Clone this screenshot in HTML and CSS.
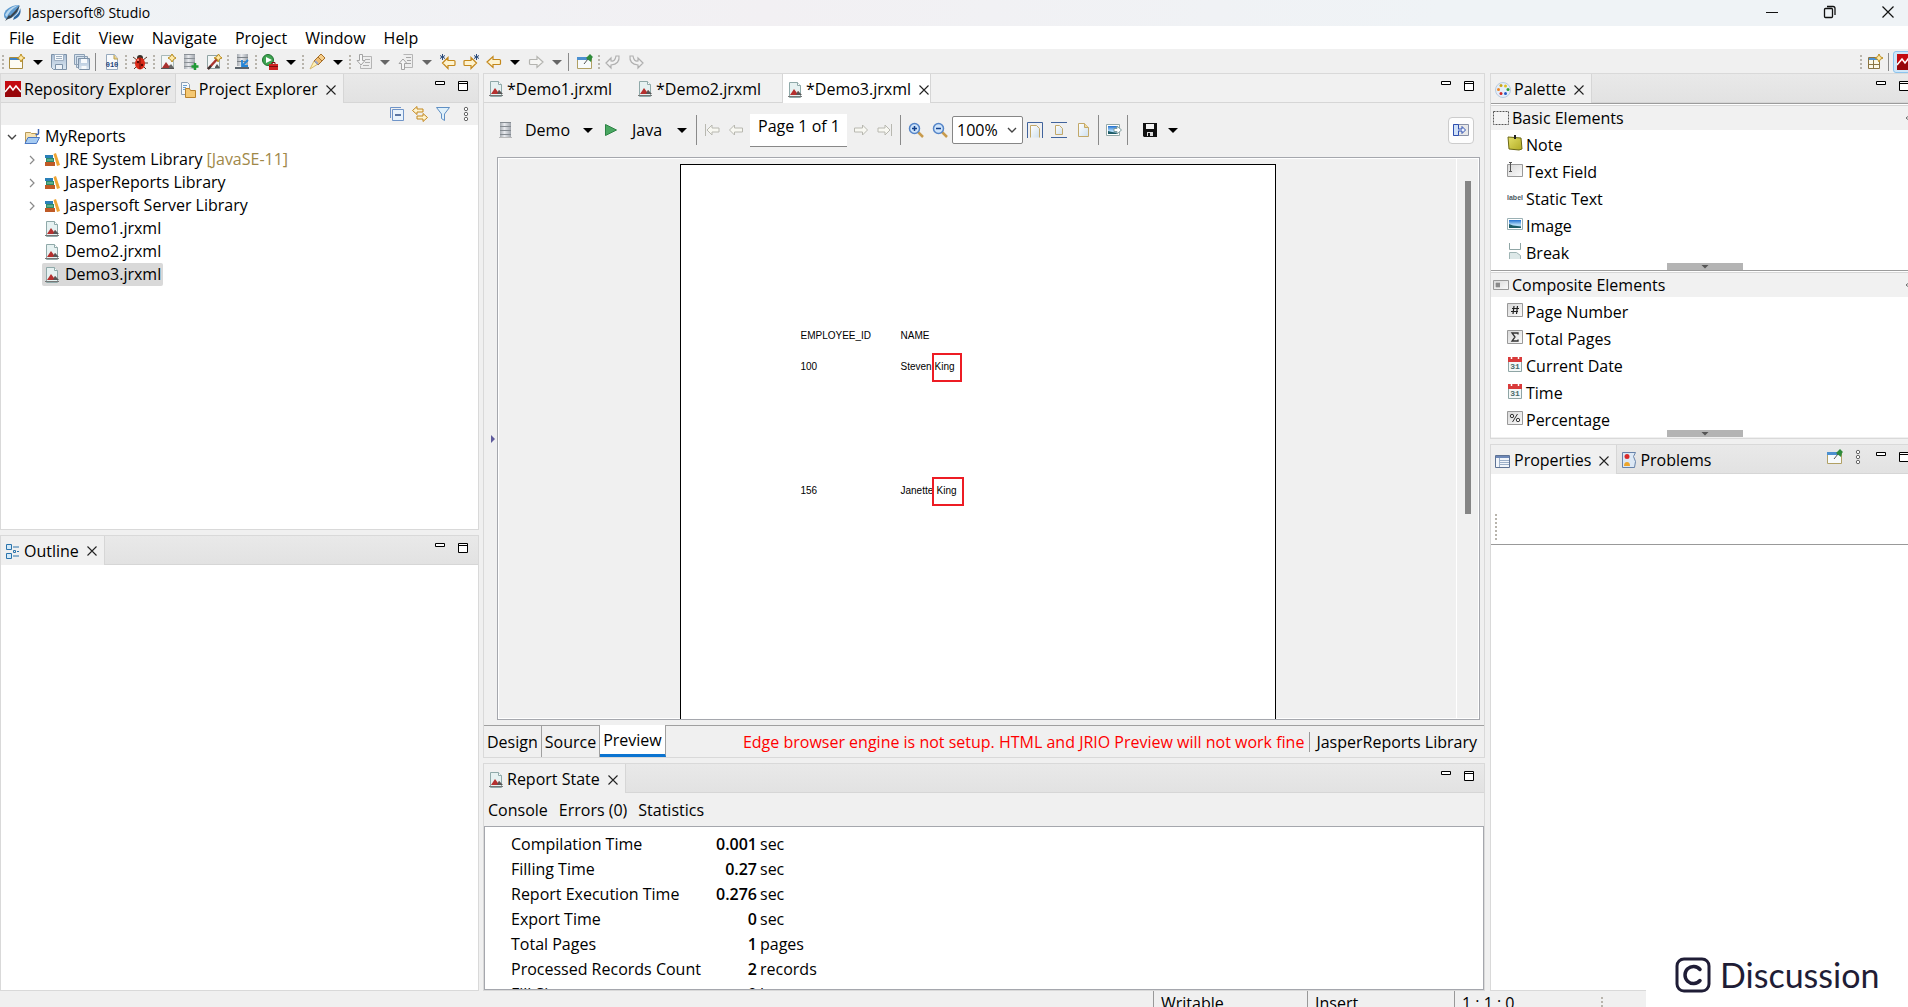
FILE: index.html
```html
<!DOCTYPE html>
<html lang="en">
<head>
<meta charset="utf-8">
<title>Jaspersoft® Studio</title>
<link rel="stylesheet" href="styles.css">
</head>
<body>
<svg class="sprite" aria-hidden="true">
  <defs>
    <linearGradient id="gFloppy" x1="0" y1="0" x2="0" y2="1"><stop offset="0" stop-color="#a9bdd4"/><stop offset="1" stop-color="#dce8f2"/></linearGradient>
    <linearGradient id="gPage" x1="0" y1="0" x2="1" y2="1"><stop offset="0" stop-color="#ffffff"/><stop offset="1" stop-color="#cfe0ee"/></linearGradient>
    <linearGradient id="gSky" x1="0" y1="0" x2="0" y2="1"><stop offset="0" stop-color="#1f6fd0"/><stop offset=".6" stop-color="#b4dcf8"/><stop offset="1" stop-color="#9cc8ea"/></linearGradient>
    <linearGradient id="gServer" x1="0" y1="0" x2="1" y2="0"><stop offset="0" stop-color="#a4a9af"/><stop offset=".4" stop-color="#e8eaee"/><stop offset="1" stop-color="#a0a5ac"/></linearGradient>
    <linearGradient id="gField" x1="0" y1="0" x2="1" y2="1"><stop offset="0" stop-color="#d8d8d8"/><stop offset="1" stop-color="#fbfbfb"/></linearGradient>
    <linearGradient id="gNote" x1="0" y1="0" x2="1" y2="1"><stop offset="0" stop-color="#e4e068"/><stop offset="1" stop-color="#b0aa24"/></linearGradient>
  </defs>
  <symbol id="logo" viewBox="0 0 20 20"><path d="M2 13C1 8 8 2 17 2c1 6-3 12-11 14-2 .3-3.500-.5-4-3z" fill="#5f9bd0"/><path d="M3 12c3-6 8-9 14-10-4 2-10 6-12 12z" fill="#b9d8ef"/><path d="M3 18l4-6 1 1 5-5 5-6-3 7-6 6-3 1z" fill="#38424c"/><path d="M12 14c3-2 6-5 6-9 2 5-1 10-7 12z" fill="#2966a3"/></symbol>
  <symbol id="report" viewBox="0 0 16 16"><path d="M2.500.5h8l3 3v12h-11z" fill="#e6f1f1" stroke="#8fa9a9"/><path d="M10.500.5v3h3" fill="#fff" stroke="#8fa9a9"/><path d="M3 13l4-6 3 4 1-2 3 4z" fill="#b5302f"/><path d="M9 13l2-4 4 4z" fill="#555"/><path d="M1 14.500h14" stroke="#777"/></symbol>
  <symbol id="reportNew" viewBox="0 0 16 16"><path d="M1.500 1.500h12v13h-12z" fill="#f3f7f7" stroke="#a9b9b9"/><path d="M2 14l4-6 3 4 1-1 3 3z" fill="#a83230"/><path d="M9 13l2-3 3 4H9z" fill="#666"/><path d="M1 14.500h13" stroke="#555"/><path d="M12 0l1.500 2.500L16 4l-2.500 1.500L12 8l-1.500-2.500L8 4l2.500-1.500z" fill="#ffe9a8" stroke="#b98b1c"/></symbol>
  <symbol id="newWiz" viewBox="0 0 16 16"><path d="M.5 3.500h13v11H.5z" fill="#fdfbf2" stroke="#a98c40"/><path d="M1 4h9v2H1z" fill="#3f82c4"/><path d="M12 0l1.300 2.700L16 4l-2.700 1.300L12 8l-1.300-2.700L8 4l2.700-1.300z" fill="#ffe9a8" stroke="#b98b1c"/></symbol>
  <symbol id="floppy" viewBox="0 0 16 16"><path d="M.5.5h15v15h-13l-2-2z" fill="url(#gFloppy)" stroke="#7d92a8"/><path d="M3.500.5h9v6h-9z" fill="#f7fafc" stroke="#9fb0c2"/><path d="M5 2.500h6M5 4.500h6" stroke="#9fb0c2"/><path d="M4.500 10.500h7v5h-7z" fill="#eef3f8" stroke="#7d92a8"/></symbol>
  <symbol id="floppies" viewBox="0 0 16 16"><path d="M.5.500h10v10H.5zM2.500 2.500h11v11h-11z" fill="#d6e2ee" stroke="#8ca0b5"/><path d="M4.500 4.500h11v11h-10l-1-1z" fill="url(#gFloppy)" stroke="#7d92a8"/><path d="M7 5h6v4H7zM7.500 12h5v3h-5z" fill="#f7fafc"/></symbol>
  <symbol id="bug" viewBox="0 0 16 16"><path d="M1 3l4 3M15 3l-4 3M0 9h4M16 9h-4M2 15l3-3M14 15l-3-3" stroke="#5a3a2a"/><circle cx="8" cy="4" r="3" fill="#39302a"/><ellipse cx="8" cy="9.500" rx="5" ry="6" fill="#dc2a18"/><path d="M8 4v11" stroke="#6e0f08"/><circle cx="6" cy="8" r="1.200" fill="#5c0a05"/><circle cx="10" cy="11" r="1.200" fill="#5c0a05"/><circle cx="6" cy="6" r="1" fill="#ff9c85"/></symbol>
  <symbol id="server" viewBox="0 0 16 16"><path d="M2 0h11v15H2z" fill="url(#gServer)"/><path d="M2 4.500h11M2 8.500h11M2 12.500h11M2 .5h11" stroke="#858b91"/><path d="M1 15.500h13" stroke="#b9b9b9"/></symbol>
  <symbol id="serverAdd" viewBox="0 0 16 16"><path d="M1 0h11v15H1z" fill="url(#gServer)"/><path d="M1 4.500h11M1 8.500h11M1 12.500h11M1 .5h11" stroke="#8a9096"/><path d="M12 9v7M8.500 12.500h7" stroke="#1f9a34" stroke-width="2.500"/></symbol>
  <symbol id="wizard" viewBox="0 0 16 16"><path d="M1.500 1.500h12v13h-12z" fill="#f3f7f7" stroke="#8fa3a3"/><path d="M9 13l2-3 3 4H9z" fill="#555"/><path d="M2 15L13 3" stroke="#a8352f" stroke-width="2.500"/><path d="M2 15l3-3" stroke="#333" stroke-width="2"/><path d="M12.500 0L14 2.500 16 4l-2.500 1-1.500 3-1-3-3-1 3-1.500z" fill="#ffe9a8" stroke="#b98b1c"/></symbol>
  <symbol id="deploy" viewBox="0 0 16 16"><path d="M3 0h11v12H3z" fill="url(#gServer)"/><path d="M3 3.500h11M3 7.500h11" stroke="#7c8288"/><path d="M1 13h14v2H1z" fill="#5b646c"/><path d="M14 6l-5 5M8 6v6h6" stroke="#2586d8" stroke-width="1.800" fill="none"/></symbol>
  <symbol id="runExt" viewBox="0 0 16 16"><circle cx="6" cy="6" r="5.500" fill="#3fa351" stroke="#1e7230"/><path d="M4 3l6 3-6 3z" fill="#fff"/><path d="M7 10h9v6H7z" fill="#cf2222"/><path d="M10 10V8.500h3V10M7 12.500h9" stroke="#7d0e0e" fill="none"/></symbol>
  <symbol id="torch" viewBox="0 0 16 16"><path d="M1 15l4-8 4 3z" fill="#fff2b8" stroke="#d9b766"/><path d="M5 7l4-4 4 4-4 4z" fill="#f0bd72" stroke="#a8702a"/><path d="M9 3l3-3 4 4-3 3z" fill="#f6cf8c" stroke="#a8702a"/><path d="M6 7l3 3" stroke="#9aa5c8" stroke-width="2"/></symbol>
  <symbol id="annDown" viewBox="0 0 16 16"><path d="M6.500 2.500h9v12h-11v-3" fill="#eee" stroke="#b5b5b5"/><path d="M9 5.500h5M9 8.500h5M7 11.500h6" stroke="#b0b0b0"/><path d="M3.500.500h3v6h2.500L5 11 1 6.500h2.500z" fill="#f6f6f6" stroke="#a3a3a3"/></symbol>
  <symbol id="annUp" viewBox="0 0 16 16"><path d="M5.500.5h9v13h-8" fill="#eee" stroke="#b5b5b5"/><path d="M8 3.500h5M9 6.500h4M9 9.500h4" stroke="#a5a5a5"/><path d="M3.500 15.500h3v-6H9L5 5 1 9.500h2.500z" fill="#f6f6f6" stroke="#a3a3a3"/></symbol>
  <symbol id="back" viewBox="0 0 16 16"><path d="M1 8l6-5.500v3h6.500q1 0 1 1v3q0 1-1 1H7v3z" fill="#fdf3d0" stroke="#c4881c" stroke-width="1.200"/></symbol>
  <symbol id="fwd" viewBox="0 0 16 16"><path d="M15 8L9 2.500v3H2.500q-1 0-1 1v3q0 1 1 1H9v3z" fill="#f6f6f4" stroke="#b4b4b0" stroke-width="1.200"/></symbol>
  <symbol id="backStar" viewBox="0 0 16 16"><path d="M2.500 9L8 3.500v3h6q1 0 1 1v3q0 1-1 1H8v3z" fill="#fdf3d0" stroke="#c4881c" stroke-width="1.200"/><path d="M2.500 0v6M0 1.500l5 3M5 1.500l-5 3" stroke="#2a4a7a"/></symbol>
  <symbol id="fwdStar" viewBox="0 0 16 16"><path d="M13.500 9L8 3.500v3H2q-1 0-1 1v3q0 1 1 1h6v3z" fill="#fdf3d0" stroke="#c4881c" stroke-width="1.200"/><path d="M13.500 0v6M11 1.500l5 3M16 1.500l-5 3" stroke="#2a4a7a"/></symbol>
  <symbol id="pin" viewBox="0 0 16 16"><path d="M.5 3.500h14v11H.5z" fill="#f7fafc" stroke="#b1a064"/><path d="M0 3h12v3H0z" fill="#4c90d0"/><path d="M7 10l4-5" stroke="#555"/><path d="M10 3l3-3 3 3-1 1-1 4-5-4z" fill="#2f8b3b"/></symbol>
  <symbol id="undo" viewBox="0 0 16 16"><path d="M1 9l5-5v3q4 1 5-5l3 0q1 8-8 9v3z" fill="#f2f2f2" stroke="#b0b0b0" stroke-width="1.200"/></symbol>
  <symbol id="redo" viewBox="0 0 16 16"><path d="M15 9l-5-5v3q-4 1-5-5L2 2q-1 8 8 9v3z" fill="#f2f2f2" stroke="#b0b0b0" stroke-width="1.200"/></symbol>
  <symbol id="perspective" viewBox="0 0 16 16"><path d="M1.500 3.500h11v11h-11z" fill="#fcf8e6" stroke="#8a7442"/><path d="M2 4h9v2H2z" fill="#4b92d4"/><path d="M6.500 6v8M2 10.500h10" stroke="#8a7442"/><path d="M12 0l1.300 2.700L16 4l-2.700 1.300L12 8l-1.300-2.700L8 4l2.700-1.300z" fill="#ffe9a8" stroke="#b98b1c"/></symbol>
  <symbol id="jasper" viewBox="0 0 16 16"><path d="M0 0h16v16H0z" fill="#c40a10"/><path d="M0 8h16v8H0z" fill="#98060a"/><path d="M0 11l5-6 3 4 3-4 5 6" stroke="#fff" stroke-width="1.500" fill="none"/></symbol>
  <symbol id="projExp" viewBox="0 0 16 16"><path d="M1.500.5h6l2 2v10h-8z" fill="#f4f8fc" stroke="#8ea0b4"/><path d="M3 3.500h4M3 5.500h3M3 7.500h3" stroke="#6aa0d0"/><path d="M5.500 6.500h4l1 2h5v7h-10z" fill="#f5c872" stroke="#b9822b"/></symbol>
  <symbol id="collapse" viewBox="0 0 16 16"><path d="M1.500 12V1.500H12" fill="none" stroke="#6f94c8"/><path d="M3.500 3.500h11v11h-11z" fill="#e9f3fc" stroke="#6f94c8"/><path d="M6 9h6" stroke="#2b4d86" stroke-width="1.500"/></symbol>
  <symbol id="link" viewBox="0 0 16 16"><path d="M.5 4.500L5 .5v2.500h6v3H5v2.500z" fill="#fdf3d0" stroke="#c4881c"/><path d="M15.500 11.500L11 7.500V10H5v3h6v2.500z" fill="#fdf3d0" stroke="#c4881c"/></symbol>
  <symbol id="filter" viewBox="0 0 16 16"><path d="M1.500 1.500h13L9.500 8v6.500l-3-2V8z" fill="#dff0fa" stroke="#5f8fc4"/></symbol>
  <symbol id="dots3" viewBox="0 0 16 16"><g fill="#fff" stroke="#666"><circle cx="8" cy="3" r="1.700"/><circle cx="8" cy="8" r="1.700"/><circle cx="8" cy="13" r="1.700"/></g></symbol>
  <symbol id="min" viewBox="0 0 16 16"><path d="M3.500 3.500h9v3h-9z" fill="#fff" stroke="#000"/></symbol>
  <symbol id="max" viewBox="0 0 16 16"><path d="M3.500 3.500h9v9h-9zM3 5.500h10" fill="#fff" stroke="#000"/></symbol>
  <symbol id="close" viewBox="0 0 16 16"><path d="M3.500 3.500l9 9M12.500 3.500l-9 9" stroke="#222" stroke-width="1.100"/></symbol>
  <symbol id="caret" viewBox="0 0 10 10"><path d="M0 3h10L5 8z" fill="currentColor"/></symbol>
  <symbol id="chevR" viewBox="0 0 10 10"><path d="M3 1l4 4-4 4" fill="none" stroke="#8a8a8a" stroke-width="1.200"/></symbol>
  <symbol id="chevD" viewBox="0 0 10 10"><path d="M1 3l4 4 4-4" fill="none" stroke="#444" stroke-width="1.400"/></symbol>
  <symbol id="folder" viewBox="0 0 16 16"><path d="M1.500 13V3.500h5l1 1h5V8" fill="#f8e3b0" stroke="#b99a58"/><path d="M1 14.500l3-6h11.500l-3 6z" fill="#a6cbf2" stroke="#4a78c4"/><path d="M14.500 0v4q0 2-3 1.500" fill="none" stroke="#3d66b4" stroke-width="1.500"/></symbol>
  <symbol id="books" viewBox="0 0 16 16"><path d="M1 3h8v3H1z" fill="#2a80b8"/><path d="M2 6h8v4H2z" fill="#2c8b68"/><path d="M3 8h6" stroke="#8fd0b4"/><path d="M1 10h10v4H1z" fill="#bf5a26"/><path d="M9.500 2l2.500-1 4 12-3 1z" fill="#eea434"/></symbol>
  <symbol id="play" viewBox="0 0 16 16"><path d="M2.500 2.500l11 5.500-11 5.500z" fill="#49a761" stroke="#2c8244"/></symbol>
  <symbol id="first" viewBox="0 0 16 16"><path d="M1.500 2v12" stroke="#b8b8b0"/><path d="M3 8l5-5v3h7v4H8v3z" fill="#f8f8f2" stroke="#b8b8b0"/></symbol>
  <symbol id="prev" viewBox="0 0 16 16"><path d="M1.500 8l5-5v3h8v4h-8v3z" fill="#f8f8f2" stroke="#b8b8b0"/></symbol>
  <symbol id="next" viewBox="0 0 16 16"><path d="M14.500 8l-5-5v3h-8v4h8v3z" fill="#f8f8f2" stroke="#b8b8b0"/></symbol>
  <symbol id="last" viewBox="0 0 16 16"><path d="M14.500 2v12" stroke="#b8b8b0"/><path d="M13 8L8 3v3H1v4h7v3z" fill="#f8f8f2" stroke="#b8b8b0"/></symbol>
  <symbol id="zoomIn" viewBox="0 0 16 16"><path d="M10 10l5 5" stroke="#c89b4c" stroke-width="2.500"/><circle cx="6.500" cy="6.500" r="5" fill="#cfe4fa" stroke="#5585c8" stroke-width="1.500"/><path d="M4 6.500h5M6.500 4v5" stroke="#12408c" stroke-width="1.500"/></symbol>
  <symbol id="zoomOut" viewBox="0 0 16 16"><path d="M10 10l5 5" stroke="#c89b4c" stroke-width="2.500"/><circle cx="6.500" cy="6.500" r="5" fill="#cfe4fa" stroke="#5585c8" stroke-width="1.500"/><path d="M4 6.500h5" stroke="#12408c" stroke-width="1.500"/></symbol>
  <symbol id="fitPage" viewBox="0 0 16 16"><path d="M.5 16V.5h15V16" fill="none" stroke="#41639c"/><path d="M3.500 15.500v-12h6l3 3v9" fill="url(#gPage)" stroke="#c2a869"/></symbol>
  <symbol id="fitWidth" viewBox="0 0 16 16"><path d="M0 .5h16M0 15.500h16" stroke="#41639c"/><path d="M4.500 12.500v-9h4l3 3v6z" fill="url(#gPage)" stroke="#c2a869"/></symbol>
  <symbol id="actual" viewBox="0 0 16 16"><path d="M3.500 14.500v-13h6l4 4v9z" fill="url(#gPage)" stroke="#c2a869"/><path d="M9.500 1.500v4h4" fill="#f5dc9c" stroke="#c2a869"/></symbol>
  <symbol id="imgExport" viewBox="0 0 16 16"><path d="M.5 2.500h13v11H.5z" fill="#fff" stroke="#93a8a8"/><path d="M2 4h10v8H2z" fill="url(#gSky)"/><path d="M2 9l4 1 6 1v1H2z" fill="#1d5c66"/><path d="M8 6.500h3V4l4.500 4-4.500 4V9.500H8z" fill="#fff" stroke="#7c9c9c"/></symbol>
  <symbol id="saveBlack" viewBox="0 0 16 16"><path d="M1 1h14v14H2l-1-1z" fill="#111"/><path d="M4 2h8v5H4z" fill="#f4f4f4"/><path d="M5 10h6v4H5z" fill="#ddd"/><path d="M6 11h2v3H6z" fill="#111"/></symbol>
  <symbol id="paletteShow" viewBox="0 0 16 16"><path d="M.5 2.500h15v11H.5z" fill="#e8e8e8" stroke="#8a92a8"/><path d="M.5 2.500h5v11h-5z" fill="#cfe0f8" stroke="#2e4fb0"/><path d="M5 7h4V4.500L12.500 8 9 11.500V9H5" fill="#eef4ff" stroke="#2e4fb0"/></symbol>
  <symbol id="palette" viewBox="0 0 16 16"><circle cx="8" cy="8" r="7.500" fill="#e4eef9" stroke="#b9cbe0"/><circle cx="6" cy="3.500" r="1.500" fill="#c9a51c"/><circle cx="10.500" cy="4" r="1.500" fill="#e0c020"/><circle cx="13" cy="7.500" r="1.500" fill="#2f9e36"/><circle cx="3.500" cy="7.500" r="1.500" fill="#ef8420"/><circle cx="6" cy="11.500" r="1.500" fill="#d02828"/><circle cx="10.500" cy="11.500" r="1.500" fill="#2458c4"/></symbol>
  <symbol id="dashed" viewBox="0 0 16 16"><path d="M.5 1.500h15v13H.5z" fill="#f4f4f4" stroke="#555" stroke-dasharray="2 1"/></symbol>
  <symbol id="compHead" viewBox="0 0 16 16"><path d="M.5 3.500h15v9H.5z" fill="url(#gField)" stroke="#999"/><path d="M2.500 7h4.500M2.500 9h4.500M4 5.500v5M6 5.500v5" stroke="#555" stroke-width=".8"/></symbol>
  <symbol id="note" viewBox="0 0 16 16"><path d="M1 2l13 1 1 11-3 1-10-1z" fill="url(#gNote)" stroke="#6b6714"/><path d="M8 0v4" stroke="#222" stroke-width="2"/></symbol>
  <symbol id="textField" viewBox="0 0 16 16"><path d="M.5 2.500h15v12H.5z" fill="url(#gField)" stroke="#999"/><path d="M2 .5h3M3.500 1v8M2 9.500h3" stroke="#555"/></symbol>
  <symbol id="image" viewBox="0 0 16 16"><path d="M.5 2.500h15v11H.5z" fill="#fff" stroke="#9ab0b4"/><path d="M2 4h12v8H2z" fill="url(#gSky)"/><path d="M2 8l4 1.500 8 1V12H2z" fill="#1d5c66"/></symbol>
  <symbol id="break" viewBox="0 0 16 16"><path d="M2.500 0v6.500h11V0" fill="#fff" stroke="#8fa5a5"/><path d="M2.500 16V9.500h7l4 3V16" fill="#dde8e8" stroke="#9fb5b5"/></symbol>
  <symbol id="hash" viewBox="0 0 16 16"><path d="M.5 1.500h15v13H.5z" fill="url(#gField)" stroke="#999"/><path d="M5 6.500h7M4 9.500h7M7 4L6 12M10.500 4l-1 8" stroke="#222" stroke-width="1.200"/></symbol>
  <symbol id="sigma" viewBox="0 0 16 16"><path d="M.5 1.500h15v13H.5z" fill="url(#gField)" stroke="#999"/><path d="M11 5.500V4H5l3 4-3 4h6v-1.500" fill="none" stroke="#333" stroke-width="1.300"/></symbol>
  <symbol id="percent" viewBox="0 0 16 16"><path d="M.5 1.500h15v13H.5z" fill="url(#gField)" stroke="#999"/><circle cx="5" cy="6" r="1.700" fill="none" stroke="#333"/><circle cx="11" cy="10" r="1.700" fill="none" stroke="#333"/><path d="M10.500 4l-5 8" stroke="#333"/></symbol>
  <symbol id="props" viewBox="0 0 16 16"><path d="M.5 2.500h14v12H.5z" fill="#f2f6fb" stroke="#5f7394"/><path d="M1 3h13v2H1z" fill="#6d88b8"/><path d="M4.500 5v9M5 7.500h9M5 9.500h9M5 11.500h9" stroke="#9cafc8"/></symbol>
  <symbol id="problems" viewBox="0 0 16 16"><path d="M1.500.5h13l-2 4 2 5-1 6h-12z" fill="#dce8f5" stroke="#6682aa"/><circle cx="6" cy="4.500" r="2.500" fill="#d92b2b"/><path d="M3 14q0-4 3-4t3 4z" fill="#eda52c"/></symbol>
  <symbol id="outline" viewBox="0 0 16 16"><path d="M1.500 1.500h5v5h-5zM1.500 10.500h5v5h-5z" fill="#d5eaf8" stroke="#2c74ac"/><path d="M8 4h6M8 13h6M12 8.500h2" stroke="#2c74ac"/><path d="M8.500 7.500h2v2h-2z" fill="none" stroke="#2c74ac"/></symbol>
</svg>

<div class="app">
  <header class="titlebar">
    <svg class="logo"><use href="#logo"/></svg>
    <span class="title">Jaspersoft® Studio</span>
    <div class="wincontrols">
      <button aria-label="Minimize window"><svg viewBox="0 0 14 14"><path d="M1 7.500h12" stroke="#111"/></svg></button>
      <button aria-label="Restore window"><svg viewBox="0 0 14 14"><path d="M1.500 4.500q0-1 1-1h6q1 0 1 1v7q0 1-1 1h-6q-1 0-1-1zM4 1.500h6q2 0 2 2V10" fill="none" stroke="#111" stroke-width="1.300"/></svg></button>
      <button aria-label="Close window"><svg viewBox="0 0 14 14"><path d="M1.500 1.500l11 11M12.500 1.500l-11 11" stroke="#111" stroke-width="1.200"/></svg></button>
    </div>
  </header>

  <nav class="menubar">
    <button>File</button><button>Edit</button><button>View</button><button>Navigate</button><button>Project</button><button>Window</button><button>Help</button>
  </nav>

  <div class="toolbar">
    <i class="grip"></i>
    <button class="tool" aria-label="New"><svg><use href="#newWiz"/></svg></button>
    <button class="drop" aria-label="New menu"><svg><use href="#caret"/></svg></button>
    <button class="tool" aria-label="Save"><svg><use href="#floppy"/></svg></button>
    <button class="tool" aria-label="Save All"><svg><use href="#floppies"/></svg></button>
    <i class="sep"></i>
    <button class="tool" aria-label="Binary"><svg viewBox="0 0 16 16"><path d="M2.500.5h8l3 4v11h-11z" fill="#f8fafc" stroke="#96a9bd"/><path d="M10 1v4h4" fill="#efd38d" stroke="#b9a050"/><text x="8" y="13" font-size="7" font-weight="bold" text-anchor="middle" fill="#1b3f7a" font-family="Liberation Mono, monospace">010</text></svg></button>
    <i class="grip"></i>
    <button class="tool" aria-label="Debug"><svg><use href="#bug"/></svg></button>
    <i class="grip"></i>
    <button class="tool" aria-label="New report"><svg><use href="#reportNew"/></svg></button>
    <button class="tool" aria-label="New data adapter"><svg><use href="#serverAdd"/></svg></button>
    <button class="tool" aria-label="Style wizard"><svg><use href="#wizard"/></svg></button>
    <i class="grip"></i>
    <button class="tool" aria-label="Publish"><svg><use href="#deploy"/></svg></button>
    <i class="grip"></i>
    <button class="tool" aria-label="External tools"><svg><use href="#runExt"/></svg></button>
    <button class="drop" aria-label="External tools menu"><svg><use href="#caret"/></svg></button>
    <i class="grip"></i>
    <button class="tool" aria-label="Search"><svg><use href="#torch"/></svg></button>
    <button class="drop" aria-label="Search menu"><svg><use href="#caret"/></svg></button>
    <i class="grip"></i>
    <button class="tool" aria-label="Next annotation"><svg><use href="#annDown"/></svg></button>
    <button class="drop dim" aria-label="Next annotation menu"><svg><use href="#caret"/></svg></button>
    <button class="tool" aria-label="Previous annotation"><svg><use href="#annUp"/></svg></button>
    <button class="drop dim" aria-label="Previous annotation menu"><svg><use href="#caret"/></svg></button>
    <button class="tool" aria-label="Previous edit"><svg><use href="#backStar"/></svg></button>
    <button class="tool" aria-label="Next edit"><svg><use href="#fwdStar"/></svg></button>
    <button class="tool" aria-label="Back"><svg><use href="#back"/></svg></button>
    <button class="drop" aria-label="Back menu"><svg><use href="#caret"/></svg></button>
    <button class="tool" aria-label="Forward"><svg><use href="#fwd"/></svg></button>
    <button class="drop dim" aria-label="Forward menu"><svg><use href="#caret"/></svg></button>
    <i class="sep"></i>
    <button class="tool" aria-label="Pin editor"><svg><use href="#pin"/></svg></button>
    <i class="grip"></i>
    <button class="tool" aria-label="Undo"><svg><use href="#undo"/></svg></button>
    <button class="tool" aria-label="Redo"><svg><use href="#redo"/></svg></button>
    <div class="perspectives">
      <i class="grip"></i>
      <button class="tool" aria-label="Open perspective"><svg><use href="#perspective"/></svg></button>
      <i class="sep"></i>
      <button class="tool current" aria-label="Report Design"><svg><use href="#jasper"/></svg></button>
    </div>
  </div>

  <main class="workbench">
    <div class="column left">
      <section class="panel">
        <div class="tabs">
          <button class="tab idle"><svg><use href="#jasper"/></svg>Repository Explorer</button>
          <button class="tab active"><svg><use href="#projExp"/></svg>Project Explorer<svg class="x"><use href="#close"/></svg></button>
          <div class="minmax"><button aria-label="Minimize"><svg><use href="#min"/></svg></button><button aria-label="Maximize"><svg><use href="#max"/></svg></button></div>
        </div>
        <div class="viewbar">
          <button class="tool" aria-label="Collapse All"><svg><use href="#collapse"/></svg></button>
          <button class="tool" aria-label="Link with Editor"><svg><use href="#link"/></svg></button>
          <button class="tool" aria-label="Filters"><svg><use href="#filter"/></svg></button>
          <button class="tool" aria-label="View Menu"><svg><use href="#dots3"/></svg></button>
        </div>
        <ul class="tree">
          <li><svg class="chev"><use href="#chevD"/></svg><svg class="ico"><use href="#folder"/></svg><span>MyReports</span></li>
          <li class="child"><svg class="chev"><use href="#chevR"/></svg><span class="node"><svg class="ico"><use href="#books"/></svg>JRE System Library <em>[JavaSE-11]</em></span></li>
          <li class="child"><svg class="chev"><use href="#chevR"/></svg><span class="node"><svg class="ico"><use href="#books"/></svg>JasperReports Library</span></li>
          <li class="child"><svg class="chev"><use href="#chevR"/></svg><span class="node"><svg class="ico"><use href="#books"/></svg>Jaspersoft Server Library</span></li>
          <li class="child"><i class="chev"></i><span class="node"><svg class="ico"><use href="#report"/></svg>Demo1.jrxml</span></li>
          <li class="child"><i class="chev"></i><span class="node"><svg class="ico"><use href="#report"/></svg>Demo2.jrxml</span></li>
          <li class="child"><i class="chev"></i><span class="node selected"><svg class="ico"><use href="#report"/></svg>Demo3.jrxml</span></li>
        </ul>
      </section>
      <section class="panel">
        <div class="tabs">
          <button class="tab active"><svg><use href="#outline"/></svg>Outline<svg class="x"><use href="#close"/></svg></button>
          <div class="minmax"><button aria-label="Minimize"><svg><use href="#min"/></svg></button><button aria-label="Maximize"><svg><use href="#max"/></svg></button></div>
        </div>
        <div class="blank"></div>
      </section>
    </div>

    <div class="column center">
      <section class="panel editor">
        <div class="tabs light">
          <button class="tab file"><svg><use href="#report"/></svg>*Demo1.jrxml</button>
          <button class="tab file"><svg><use href="#report"/></svg>*Demo2.jrxml</button>
          <button class="tab file open"><svg><use href="#report"/></svg>*Demo3.jrxml<svg class="x"><use href="#close"/></svg></button>
          <div class="minmax"><button aria-label="Minimize"><svg><use href="#min"/></svg></button><button aria-label="Maximize"><svg><use href="#max"/></svg></button></div>
        </div>
        <div class="previewbar">
          <svg class="ico"><use href="#server"/></svg>
          <button class="pick source">Demo<svg><use href="#caret"/></svg></button>
          <button class="tool" aria-label="Run"><svg><use href="#play"/></svg></button>
          <button class="pick format">Java<svg><use href="#caret"/></svg></button>
          <i class="rule"></i>
          <button class="tool" aria-label="First page"><svg><use href="#first"/></svg></button>
          <button class="tool" aria-label="Previous page"><svg><use href="#prev"/></svg></button>
          <input class="pageno" aria-label="Page" value="Page 1 of 1">
          <button class="tool" aria-label="Next page"><svg><use href="#next"/></svg></button>
          <button class="tool" aria-label="Last page"><svg><use href="#last"/></svg></button>
          <i class="rule"></i>
          <button class="tool" aria-label="Zoom in"><svg><use href="#zoomIn"/></svg></button>
          <button class="tool" aria-label="Zoom out"><svg><use href="#zoomOut"/></svg></button>
          <div class="zoom"><select aria-label="Zoom"><option>100%</option></select><svg><use href="#chevD"/></svg></div>
          <button class="tool" aria-label="Fit page"><svg><use href="#fitPage"/></svg></button>
          <button class="tool" aria-label="Fit width"><svg><use href="#fitWidth"/></svg></button>
          <button class="tool" aria-label="Actual size"><svg><use href="#actual"/></svg></button>
          <i class="rule"></i>
          <button class="tool" aria-label="Export image"><svg><use href="#imgExport"/></svg></button>
          <i class="rule narrow"></i>
          <button class="tool save" aria-label="Save report"><svg><use href="#saveBlack"/></svg></button>
          <button class="drop" aria-label="Save report menu"><svg><use href="#caret"/></svg></button>
          <button class="flyout" aria-label="Show palette"><svg><use href="#paletteShow"/></svg></button>
        </div>
        <div class="canvasrow">
          <button class="splitter" aria-label="Show parameters"><svg viewBox="0 0 6 8"><path d="M1 0l4 4-4 4z" fill="#5f5a9c"/></svg></button>
          <div class="viewport">
            <div class="sheet">
              <table class="report">
                <colgroup><col class="id"><col class="given"><col class="family"></colgroup>
                <thead><tr><th>EMPLOYEE_ID</th><th colspan="2">NAME</th></tr></thead>
                <tbody>
                  <tr><td>100</td><td>Steven</td><td><span class="mark">King</span></td></tr>
                  <tr><td>156</td><td>Janette</td><td><span class="mark wide">King</span></td></tr>
                </tbody>
              </table>
            </div>
            <div class="scroll"><i></i></div>
          </div>
        </div>
        <footer class="pages">
          <button>Design</button><button>Source</button><button class="on">Preview</button>
          <p class="warning">Edge browser engine is not setup. HTML and JRIO Preview will not work fine</p>
          <p class="runtime">JasperReports Library</p>
        </footer>
      </section>

      <section class="panel state">
        <div class="tabs">
          <button class="tab active"><svg><use href="#report"/></svg>Report State<svg class="x"><use href="#close"/></svg></button>
          <div class="minmax"><button aria-label="Minimize"><svg><use href="#min"/></svg></button><button aria-label="Maximize"><svg><use href="#max"/></svg></button></div>
        </div>
        <div class="subtabs"><button>Console</button><button>Errors (0)</button><button>Statistics</button></div>
        <div class="stats">
          <table>
            <tr><th>Compilation Time</th><td>0.001</td><td class="unit">sec</td></tr>
            <tr><th>Filling Time</th><td>0.27</td><td class="unit">sec</td></tr>
            <tr><th>Report Execution Time</th><td>0.276</td><td class="unit">sec</td></tr>
            <tr><th>Export Time</th><td>0</td><td class="unit">sec</td></tr>
            <tr><th>Total Pages</th><td>1</td><td class="unit">pages</td></tr>
            <tr><th>Processed Records Count</th><td>2</td><td class="unit">records</td></tr>
            <tr><th>Fill Size</th><td>0</td><td class="unit">bytes</td></tr>
          </table>
        </div>
      </section>
    </div>

    <div class="column right">
      <section class="panel palette">
        <div class="tabs">
          <button class="tab active"><svg><use href="#palette"/></svg>Palette<svg class="x"><use href="#close"/></svg></button>
          <div class="minmax"><button aria-label="Minimize"><svg><use href="#min"/></svg></button><button aria-label="Maximize"><svg><use href="#max"/></svg></button></div>
        </div>
        <div class="drawer">
          <h2><svg><use href="#dashed"/></svg>Basic Elements<svg class="tack" viewBox="0 0 6 6"><path d="M5 0L1 3l4 3z" fill="#fff" stroke="#666"/></svg></h2>
          <ul>
            <li><svg><use href="#note"/></svg>Note</li>
            <li><svg><use href="#textField"/></svg>Text Field</li>
            <li><svg viewBox="0 0 16 16"><text x="8" y="11" font-size="7" font-weight="bold" text-anchor="middle" fill="#4b5a62" font-family="Liberation Sans, sans-serif">label</text></svg>Static Text</li>
            <li><svg><use href="#image"/></svg>Image</li>
            <li><svg><use href="#break"/></svg>Break</li>
          </ul>
          <button class="more" aria-label="Scroll down"><svg><use href="#caret"/></svg></button>
        </div>
        <div class="drawer">
          <h2><svg><use href="#compHead"/></svg>Composite Elements<svg class="tack" viewBox="0 0 6 6"><path d="M5 0L1 3l4 3z" fill="#fff" stroke="#666"/></svg></h2>
          <ul>
            <li><svg><use href="#hash"/></svg>Page Number</li>
            <li><svg><use href="#sigma"/></svg>Total Pages</li>
            <li><svg viewBox="0 0 16 16"><path d="M1.500 4.500h13v11h-13z" fill="#f4f8f8" stroke="#8fa5a5"/><path d="M1 1h14v5H1z" fill="#d93a3a"/><path d="M4.500 0v3M11.500 0v3" stroke="#fff" stroke-width="1.500"/><text x="8" y="13" font-size="8" font-weight="bold" text-anchor="middle" fill="#4a6a6a" font-family="Liberation Mono, monospace">31</text></svg>Current Date</li>
            <li><svg viewBox="0 0 16 16"><path d="M1.500 4.500h13v11h-13z" fill="#f4f8f8" stroke="#8fa5a5"/><path d="M1 1h14v5H1z" fill="#d93a3a"/><path d="M4.500 0v3M11.500 0v3" stroke="#fff" stroke-width="1.500"/><text x="8" y="13" font-size="8" font-weight="bold" text-anchor="middle" fill="#4a6a6a" font-family="Liberation Mono, monospace">31</text></svg>Time</li>
            <li><svg><use href="#percent"/></svg>Percentage</li>
          </ul>
          <button class="more" aria-label="Scroll down"><svg><use href="#caret"/></svg></button>
        </div>
      </section>
      <section class="panel props">
        <div class="tabs">
          <button class="tab active"><svg><use href="#props"/></svg>Properties<svg class="x"><use href="#close"/></svg></button>
          <button class="tab plain"><svg><use href="#problems"/></svg>Problems</button>
          <div class="minmax"><button aria-label="Pin"><svg><use href="#pin"/></svg></button><button aria-label="View Menu"><svg><use href="#dots3"/></svg></button><button aria-label="Minimize"><svg><use href="#min"/></svg></button><button aria-label="Maximize"><svg><use href="#max"/></svg></button></div>
        </div>
        <div class="prophead"><i class="grip tall"></i></div>
        <div class="blank"></div>
      </section>
    </div>
  </main>

  <footer class="status">
    <span class="mode">Writable</span><span class="insert">Insert</span><span class="pos">1 : 1 : 0</span><i class="grip"></i>
  </footer>
</div>

<div class="badge">
  <svg viewBox="0 0 36 36"><rect x="2" y="2" width="32" height="32" rx="7" fill="none" stroke="#1f1d36" stroke-width="3"/><path d="M25 12.500a8.500 8.500 0 1 0 0 11" fill="none" stroke="#1f1d36" stroke-width="3.500" stroke-linecap="round"/></svg>
  <span>Discussion</span>
</div>
</body>
</html>
```
FILE: styles.css
```css
* { box-sizing: border-box; }

body {
  margin: 0;
  overflow: hidden;
  background: #f0f0f0;
  color: #000;
  font: 16px/23px "Open Sans", "Noto Sans", sans-serif;
}

button, input, select {
  margin: 0;
  padding: 0;
  border: 0;
  background: none;
  color: inherit;
  font: inherit;
}

ul, p, h2 { margin: 0; padding: 0; font-weight: 400; font-size: 16px; list-style: none; }
svg { display: block; flex: none; width: 16px; height: 16px; }
.sprite { position: absolute; width: 0; height: 0; }

/* The shell runs slightly past the right edge of the window. */
.app {
  display: flex;
  flex-direction: column;
  width: calc(100% + 12px);
  height: 100vh;
}

.titlebar {
  display: flex;
  align-items: center;
  height: 26px;
  flex: none;
  padding-left: 2px;
  background: linear-gradient(90deg, #eff3f6, #f2f0f3 40%, #eff3f6 75%);
}
.logo { width: 20px; height: 20px; }
.title { margin-left: 6px; font-size: 14px; line-height: 20px; }
.wincontrols { display: flex; margin-left: auto; padding-right: 3px; }
.wincontrols button { display: grid; place-items: center; width: 58px; height: 26px; padding-bottom: 3px; }
.wincontrols svg { width: 14px; height: 14px; }

.menubar {
  display: flex;
  flex: none;
  gap: 18px;
  height: 23px;
  padding: 1px 0 0 9px;
  background: #fff;
}

.toolbar { display: flex; align-items: center; flex: none; height: 24px; padding-top: 2px; }
.tool { display: grid; place-items: center; width: 23px; height: 22px; flex: none; }
.drop { display: grid; place-items: center; width: 19px; height: 22px; flex: none; }
.drop svg { width: 10px; height: 10px; }
.dim { color: #666; }
.grip { flex: none; width: 2px; height: 14px; margin: 0 1px 0 2px; background: repeating-linear-gradient(#b8b4ac 0 2px, transparent 2px 4px); }
.sep { flex: none; width: 1px; height: 18px; margin: 0 4px 0 2px; background: #8a8a8a; }
.perspectives { display: flex; align-items: center; margin-left: auto; padding-right: 4px; }
.current { border: 1px solid #8cc4ee; border-radius: 3px; background: #cfe6f8; }

.workbench {
  display: grid;
  grid-template-columns: 479px minmax(0, 1fr) 430px;
  gap: 4px;
  flex: 1;
  min-height: 0;
}
.column { display: grid; gap: 5px; min-width: 0; min-height: 0; }
.left { grid-template-rows: 1fr 1fr; }
.center { grid-template-rows: minmax(0, 1fr) 228px; padding-right: 1px; }
.right { grid-template-rows: auto minmax(0, 1fr); }

.panel { display: flex; flex-direction: column; min-height: 0; min-width: 0; border: 1px solid #d9d9d9; }
.blank { flex: 1; background: #fff; }

.tabs {
  display: flex;
  flex: none;
  height: 29px;
  border-bottom: 1px solid #d6d6d6;
  background: linear-gradient(#e9e9e9, #e2e2e2);
}
.tabs.light { background: #f1f1f1; }
.tab {
  display: flex;
  align-items: center;
  gap: 3px;
  height: 28px;
  padding: 2px 4px 0;
  border-right: 1px solid #d6d6d6;
  white-space: nowrap;
}
.tab .x { margin-left: 2px; }
.idle { background: #e8e8e8; }
.active { height: 29px; background: #f0f0f0; }
.plain { border-right: 0; }
.file { width: 149px; border-right: 0; }
.open { height: 29px; border: 1px solid #d6d6d6; border-width: 0 1px; background: #fff; }
.minmax { display: flex; margin-left: auto; padding: 4px 7px 0 0; gap: 7px; }
.minmax button { height: 16px; }

.viewbar { display: flex; justify-content: flex-end; flex: none; height: 22px; padding-right: 1px; }

.tree { flex: 1; background: #fff; }
.tree li { display: flex; align-items: center; height: 23px; padding-left: 6px; }
.tree .child { padding-left: 26px; }
.chev { width: 10px; height: 10px; flex: none; }
.tree li > .ico { margin: 0 5px 0 7px; }
.node { display: flex; align-items: center; height: 23px; margin-left: 5px; padding: 0 2px; border-radius: 2px; }
.node .ico { margin-right: 5px; }
.node em { margin-left: 4px; color: #a08848; font-style: normal; }
.selected { background: #d9d9d9; }

.previewbar { display: flex; align-items: center; flex: none; height: 54px; padding: 0 10px 0 14px; }
.pick { display: flex; align-items: center; justify-content: space-between; margin-right: 6px; }
.pick svg { width: 10px; height: 10px; }
.source { width: 68px; margin-left: 11px; }
.format { width: 55px; margin-left: 9px; }
.rule { flex: none; width: 1px; height: 30px; margin: 0 3px; background: #8a8a8a; }
.pageno { width: 97px; height: 33px; margin: 0 2px; padding: 0 8px 8px; border-bottom: 1px solid #888; background: #fff; }
.previewbar .tool { width: 24px; }
.zoom { position: relative; width: 71px; height: 28px; border: 1px solid #868686; border-radius: 2px; background: #fff; }
.zoom select { width: 100%; height: 26px; padding-left: 4px; appearance: none; }
.zoom svg { position: absolute; right: 5px; top: 8px; width: 10px; height: 10px; }
.rule.narrow { margin: 0 5px 0 1px; }
.save { margin-left: 5px; }
.previewbar .drop { width: 22px; }
.flyout { display: grid; place-items: center; width: 26px; height: 27px; margin-left: auto; border: 1px solid #ccc; border-radius: 4px; background: #fdfdfd; }

.canvasrow { display: flex; flex: 1; min-height: 0; padding-right: 4px; }
.splitter { display: grid; place-items: center; width: 13px; flex: none; padding-left: 4px; }
.splitter svg { width: 6px; height: 8px; }
.viewport { display: flex; justify-content: center; position: relative; flex: 1; min-width: 0; padding: 6px 22px 0 0; border: 1px solid #a5a7ad; box-shadow: inset 0 0 0 1px #fff; }
.sheet { width: 596px; border: 1px solid #000; border-bottom: 0; background: #fff; }
.scroll { position: absolute; top: 1px; right: 1px; bottom: 1px; width: 22px; padding: 22px 7px 0; border-left: 1px solid #fff; }
.scroll i { display: block; width: 6px; height: 62%; margin-left: 1px; background: #858585; }

.report { width: 220px; margin: 157px 0 0 120px; border-collapse: collapse; table-layout: fixed; font: 10px/28px "Liberation Sans", Arial, sans-serif; }
.report th, .report td { height: 124px; padding: 0; font-weight: 400; text-align: left; vertical-align: top; }
.report th { height: 31px; }
.report .id { width: 100px; }
.report .given { width: 31px; }
.report .family { width: 89px; }
.mark { position: relative; display: block; width: 30px; height: 29px; padding-left: 1px; border: 2px solid #ed1c24; background: #fff; line-height: 24px; }
.mark.wide { width: 32px; padding-left: 3px; }

.pages { display: flex; flex: none; height: 37px; padding-top: 5px; background: linear-gradient(#a0a0a0, #a0a0a0) 0 5px / 100% 1px no-repeat; }
.pages button { height: 32px; padding: 2px 3px 0; border-right: 1px solid #a0a0a0; }
.pages .on { border-bottom: 3px solid #0b74d1; background: #fff; }
.warning { margin: 6px 0 0 auto; color: #f00; white-space: nowrap; }
.runtime { height: 20px; margin: 7px 7px 0 5px; padding-left: 6px; border-left: 1px solid #999; line-height: 20px; white-space: nowrap; }

.subtabs { display: flex; flex: none; gap: 11px; height: 33px; padding: 1px 0 0 4px; }
.stats { flex: 1; min-height: 0; overflow: hidden; border: 1px solid #a5a7ad; background: #fff; }
.stats table { margin: 5px 0 0 26px; border-collapse: collapse; }
.stats th, .stats td { height: 25px; padding: 0; font-weight: 400; text-align: left; }
.stats th { width: 192px; }
.stats td { width: 54px; font-weight: 600; text-align: right; }
.stats .unit { width: 80px; padding-left: 3px; font-weight: 400; text-align: left; }

.palette { padding-bottom: 1px; }
.drawer { display: flex; flex-direction: column; border-top: 1px solid #9c9c9c; background: #fff; }
.drawer h2 { display: flex; align-items: center; gap: 3px; height: 25px; margin-top: 1px; padding: 0 8px 0 2px; border-top: 1px solid #d6d6d6; background: #f1f1f1; }
.drawer .tack { width: 6px; height: 6px; margin-left: auto; }
.drawer li { display: flex; align-items: center; gap: 3px; height: 27px; padding: 3px 0 0 16px; }
.drawer li svg { margin-bottom: 5px; }
.more { display: grid; place-items: center; align-self: center; width: 76px; height: 7px; margin-top: -2px; background: #b4b4b4; color: #555; }
.more svg { width: 8px; height: 7px; }

.prophead { flex: none; height: 71px; padding: 40px 0 0 2px; border-bottom: 1px solid #999; background: #fff; }
.tall { display: block; height: 26px; }

.status { display: flex; flex: none; height: 16px; overflow: hidden; padding-left: 1153px; }
.status span { height: 24px; padding: 1px 0 0 7px; border-left: 1px solid #999; }
.status .mode { width: 154px; }
.status .insert { width: 147px; }
.status .pos { width: 145px; }
.status .grip { margin-top: 6px; }

.badge {
  position: fixed;
  right: 0;
  bottom: 0;
  display: flex;
  align-items: center;
  gap: 9px;
  width: 262px;
  height: 64px;
  padding-left: 29px;
  background: #fff;
  color: #1f1d36;
  font: 34px/40px Lato, "Open Sans", sans-serif;
}
.badge svg { width: 36px; height: 36px; }
```
